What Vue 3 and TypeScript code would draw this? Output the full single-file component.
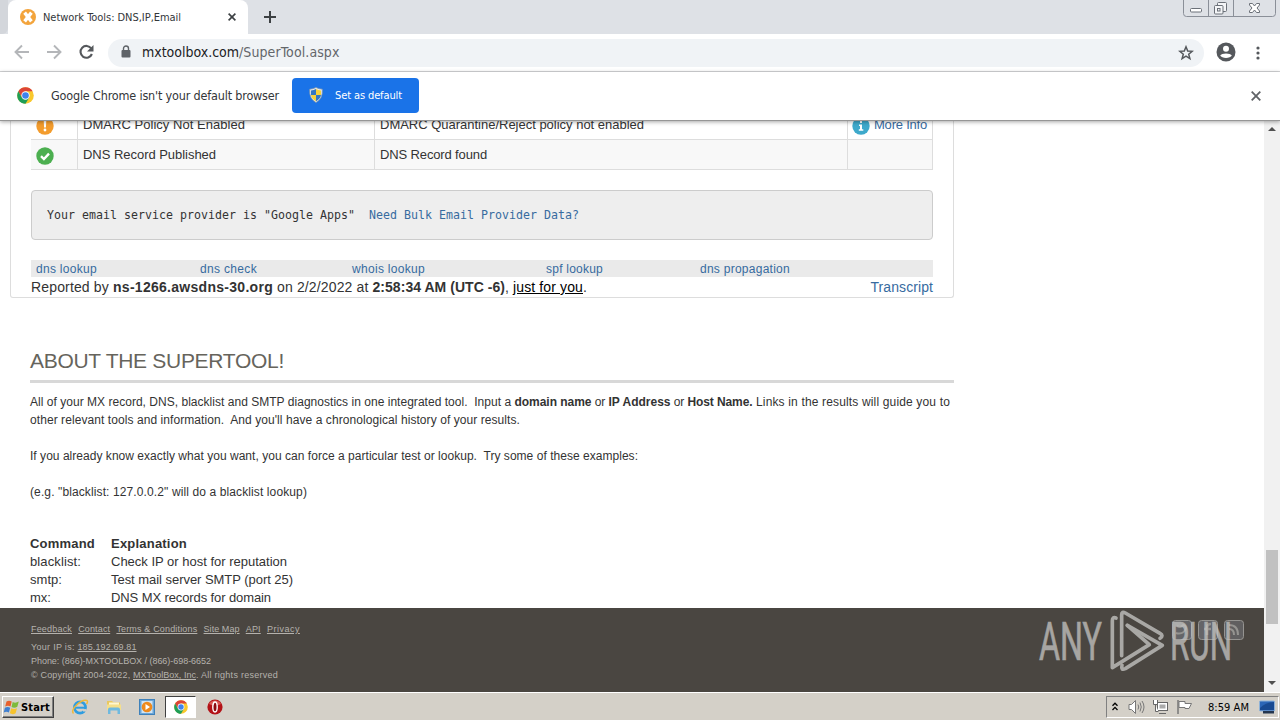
<script setup lang="ts">
interface Piece { t: string; w: number; kind?: string }

const setWidth = (el: HTMLElement, target: number) => {
  const text = el.textContent ?? ''
  el.style.letterSpacing = '0px'
  const natural = el.getBoundingClientRect().width
  el.style.letterSpacing = `${(target - natural) / Math.max(text.length, 1)}px`
}
// Spreads a run of text so that it occupies the given advance width.
const vFit = {
  mounted: (el: HTMLElement, binding: { value: number }) => setWidth(el, binding.value),
}

const report: Piece[] = [
  { t: 'Reported by ', w: 82 },
  { t: 'ns-1266.awsdns-30.org', w: 160, kind: 'bold' },
  { t: ' on 2/2/2022 at ', w: 99.5 },
  { t: '2:58:34 AM (UTC -6)', w: 132.5, kind: 'bold' },
  { t: ', ', w: 8 },
  { t: 'just for you', w: 70, kind: 'under' },
  { t: '.', w: 4 },
]
const about: Piece[][] = [
  [
    { t: 'All of your MX record, DNS, blacklist and SMTP diagnostics in one integrated tool.  Input a ', w: 484.5 },
    { t: 'domain name', w: 77, kind: 'bold' },
    { t: ' or ', w: 17 },
    { t: 'IP Address', w: 62, kind: 'bold' },
    { t: ' or ', w: 17 },
    { t: 'Host Name.', w: 65, kind: 'bold' },
    { t: ' Links in the results will guide you to', w: 197.5 },
  ],
  [{ t: "other relevant tools and information.  And you'll have a chronological history of your results.", w: 490 }],
  [],
  [{ t: 'If you already know exactly what you want, you can force a particular test or lookup.  Try some of these examples:', w: 608 }],
  [],
  [{ t: '(e.g. "blacklist: 127.0.0.2" will do a blacklist lookup)', w: 277 }],
]
const commands = [
  { c: 'Command', cw: 65, e: 'Explanation', ew: 76, head: true },
  { c: 'blacklist:', cw: 51, e: 'Check IP or host for reputation', ew: 176 },
  { c: 'smtp:', cw: 32, e: 'Test mail server SMTP (port 25)', ew: 182 },
  { c: 'mx:', cw: 21, e: 'DNS MX records for domain', ew: 160 },
]
const quick = [
  { t: 'dns lookup', w: 61, col: 164 },
  { t: 'dns check', w: 57, col: 152 },
  { t: 'whois lookup', w: 73, col: 194 },
  { t: 'spf lookup', w: 57, col: 154 },
  { t: 'dns propagation', w: 90, col: 200 },
]
const footLinks: Piece[] = [
  { t: 'Feedback', w: 41 }, { t: 'Contact', w: 32 }, { t: 'Terms & Conditions', w: 81 },
  { t: 'Site Map', w: 36 }, { t: 'API', w: 15 }, { t: 'Privacy', w: 33 },
]
</script>

<template>
  <div class="screen">
    <div class="tabstrip">
      <div class="stub"></div>
      <div class="tab">
        <svg class="fav" width="16" height="16" viewBox="0 0 16 16"><circle cx="8" cy="8" r="8" fill="#f3a43c" /><path d="M4.6 3.6 11.4 12.4M11.4 3.6 4.6 12.4" stroke="#fff" stroke-width="3.4" /></svg>
        <span v-fit="138" class="tabtitle">Network Tools: DNS,IP,Email</span>
        <svg class="tabx" width="8" height="8" viewBox="0 0 8 8"><path d="M.6.6 7.4 7.4M7.4.6.6 7.4" stroke="#3c4043" stroke-width="1.6" /></svg>
      </div>
      <svg class="plus" width="12" height="12" viewBox="0 0 12 12"><path d="M6 0V12M0 6H12" stroke="#3c4043" stroke-width="2" /></svg>
      <div class="winbtns">
        <svg width="93" height="17" viewBox="0 0 93 17" fill="none" stroke="#6b7078">
          <path d="M.5 0V13.5Q.5 16.500 3.500 16.500H89.500Q92.500 16.500 92.500 13.500V0M25.500 0V16M50.500 0V16" stroke="#8a8f98" />
          <rect x="7.500" y="8.500" width="11" height="3.500" rx="1" fill="#fff" />
          <rect x="34.500" y="2.500" width="9" height="9" rx="1" fill="#f4f5f7" /><rect x="31.500" y="5.500" width="8.500" height="8.500" rx="1" fill="#f4f5f7" /><rect x="34.500" y="8.500" width="2.500" height="2.500" />
          <path d="M66.500 3.500H69.500L71.500 6 73.500 3.500H76.500V5L74 8 76.500 11V12.500H73.500L71.500 10 69.500 12.500H66.500V11L69 8 66.500 5Z" fill="#fff" />
        </svg>
      </div>
    </div>

    <div class="toolbar">
      <svg class="nav" width="100" height="20" viewBox="0 0 100 20" fill="none" stroke-width="1.900">
        <path d="M22 10H9M15 3.500 8.500 10 15 16.500" stroke="#b4b6b9" />
        <path d="M40 10H53M47 3.500 53.500 10 47 16.500" stroke="#b4b6b9" />
        <path d="M84.300 6.500A5.900 5.900 0 1 0 84.900 12" stroke="#55585c" stroke-width="2.100" />
        <path d="M86.500 3V9.500H80Z" fill="#55585c" stroke="none" />
      </svg>
      <div class="omni">
        <svg class="lock" width="10" height="13" viewBox="0 0 10 13"><rect x=".5" y="5" width="9" height="7.500" rx="1" fill="#5f6368" /><path d="M2.500 6V3.500A2.500 2.500 0 0 1 7.500 3.500V6" fill="none" stroke="#5f6368" stroke-width="1.400" /></svg>
        <span class="url"><span v-fit="97" class="host">mxtoolbox.com</span><span v-fit="100.500">/SuperTool.aspx</span></span>
        <svg class="star" width="16" height="16" viewBox="0 0 16 16"><path d="M8 1.800 9.700 6 14.200 6.300 10.700 9.200 11.900 13.600 8 11.200 4.100 13.600 5.300 9.200 1.800 6.300 6.300 6Z" fill="none" stroke="#55585c" stroke-width="1.500" /></svg>
      </div>
      <svg class="avatar" width="20" height="20" viewBox="0 0 20 20"><circle cx="10" cy="10" r="9.500" fill="#55585c" /><circle cx="10" cy="6.700" r="3" fill="#fff" /><path d="M4.200 13.600C5.400 10.800 14.600 10.800 15.800 13.600 14.200 16.900 5.800 16.900 4.200 13.600Z" fill="#fff" /></svg>
      <svg class="dots" width="4" height="14" viewBox="0 0 4 14" fill="#55585c"><circle cx="2" cy="2" r="1.600" /><circle cx="2" cy="7" r="1.600" /><circle cx="2" cy="12" r="1.600" /></svg>
    </div>

    <div class="infobar">
      <svg width="17" height="17" viewBox="0 0 16 16"><use href="#chromeball" /></svg>
      <span v-fit="228" class="infotext">Google Chrome isn't your default browser</span>
      <button class="setdef">
        <svg width="14" height="16" viewBox="0 0 14 16"><path d="M7 .5Q10 2 13.300 2.200 14 12 7 15.500 0 12 .7 2.200 4 2 7 .5Z" fill="#e9edf2" stroke="#7d96ac" stroke-width=".8" /><path d="M7 2Q4.500 3.300 2 3.500V8H7Z" fill="#3276c4" /><path d="M7 2Q9.500 3.300 12 3.500V8H7Z" fill="#f6d13b" /><path d="M2 8H7V14.200Q2.600 12 2 8Z" fill="#f6d13b" /><path d="M12 8H7V14.200Q11.400 12 12 8Z" fill="#3276c4" /></svg>
        <span v-fit="67">Set as default</span>
      </button>
      <svg class="infox" width="10" height="10" viewBox="0 0 10 10"><path d="M.7.7 9.300 9.300M9.300.7.7 9.300" stroke="#606367" stroke-width="1.800" /></svg>
    </div>

    <div class="viewport">
      <div class="page">
        <section class="panel">
          <div class="results">
            <div class="row first">
              <div class="ic"><svg width="18" height="18" viewBox="0 0 18 18"><circle cx="9" cy="9" r="8.700" fill="#f39c2d" /><path d="M7.700 3.500H10.300L9.900 10.500H8.100Z" fill="#fff" /><circle cx="9" cy="13" r="1.400" fill="#fff" /></svg></div>
              <div class="name"><span v-fit="162">DMARC Policy Not Enabled</span></div>
              <div class="desc"><span v-fit="264">DMARC Quarantine/Reject policy not enabled</span></div>
              <div class="info"><svg width="18" height="18" viewBox="0 0 18 18"><circle cx="9" cy="9" r="8.700" fill="#3ea9cb" /><path d="M7 7.500H10V12.300H11.300V13.700H6.800V12.300H8V9H7ZM8 3.700H10V6H8Z" fill="#fff" /></svg><a v-fit="53">More Info</a></div>
            </div>
            <div class="row second">
              <div class="ic"><svg width="18" height="18" viewBox="0 0 18 18"><circle cx="9" cy="9" r="8.700" fill="#4caf50" /><path d="M5 9.200 7.900 12 13 6.700" fill="none" stroke="#fff" stroke-width="2.400" /></svg></div>
              <div class="name"><span v-fit="133">DNS Record Published</span></div>
              <div class="desc"><span v-fit="107">DNS Record found</span></div>
              <div class="info"></div>
            </div>
          </div>
          <div class="provider"><span v-fit="308">Your email service provider is "Google Apps"</span><a v-fit="210">Need Bulk Email Provider Data?</a></div>
          <nav class="quick">
            <div v-for="q in quick" :key="q.t" :style="{ width: q.col + 'px' }"><a v-fit="q.w">{{ q.t }}</a></div>
          </nav>
          <div class="report">
            <span v-for="p in report" :key="p.t" v-fit="p.w" :class="p.kind">{{ p.t }}</span>
            <a v-fit="62.500" class="transcript">Transcript</a>
          </div>
        </section>

        <section class="about">
          <h2><span v-fit="254">ABOUT THE SUPERTOOL!</span></h2>
          <div class="prose">
            <div v-for="(line, i) in about" :key="i" class="line"><span v-for="(p, j) in line" :key="j" v-fit="p.w" :class="p.kind">{{ p.t }}</span></div>
          </div>
          <div class="cmds">
            <div v-for="c in commands" :key="c.c" class="cmd" :class="{ bold: c.head }">
              <div class="cname"><span v-fit="c.cw">{{ c.c }}</span></div><span v-fit="c.ew">{{ c.e }}</span>
            </div>
          </div>
        </section>

        <footer class="foot">
          <div class="flinks"><a v-for="l in footLinks" :key="l.t" v-fit="l.w">{{ l.t }}</a></div>
          <div class="fline ip"><span v-fit="46.5">Your IP is: </span><a v-fit="59">185.192.69.81</a></div>
          <div class="fline"><span v-fit="180">Phone: (866)-MXTOOLBOX / (866)-698-6652</span></div>
          <div class="fline"><span v-fit="102">© Copyright 2004-2022, </span><a v-fit="63">MXToolBox, Inc</a><span v-fit="82">. All rights reserved</span></div>
        </footer>
      </div>
      <div class="scroll">
        <svg width="8" height="4" viewBox="0 0 8 4"><path d="M0 4 4 0 8 4Z" fill="#505050" /></svg>
        <div class="thumb"></div>
        <svg width="8" height="4" viewBox="0 0 8 4"><path d="M0 0H8L4 4Z" fill="#505050" /></svg>
      </div>
    </div>

    <div class="taskbar">
      <div class="start">
        <svg width="18" height="17" viewBox="0 0 18 17"><path d="M3.500 2.500Q6 .8 8.700 2.500L7.500 7.500Q5 6 2.200 7.500Z" fill="#e8602c" /><path d="M9.700 3Q12.500 4.500 15.800 2.500L14.300 7.700Q11.500 9.500 8.500 7.900Z" fill="#7dba3b" /><path d="M1.900 8.700Q4.600 7.200 7.200 8.700L5.900 13.600Q3.500 12 .7 13.500Z" fill="#3f7fd0" /><path d="M8.200 9.200Q11 10.800 14 9.200L12.600 14.200Q9.700 16 6.900 14.300Z" fill="#f6c32d" /></svg>
        <span v-fit="29">Start</span>
      </div>
      <svg class="ie" width="18" height="18" viewBox="0 0 18 18" fill="none"><circle cx="9" cy="9.500" r="5.600" stroke="#2f9de0" stroke-width="2.600" /><path d="M4 9.700H14.500" stroke="#2f9de0" stroke-width="2" /><path d="M12 12.300H15.500" stroke="#d4d0c8" stroke-width="2.400" /><path d="M2.500 15.500C-1 12 10 .8 15.700 2.400 17 3 16.500 4.700 15.500 6.200" stroke="#eeb83a" stroke-width="1.500" /></svg>
      <svg class="folder" width="18" height="18" viewBox="0 0 18 18"><path d="M2 3H7L8.500 4.500H15V12H2Z" fill="#e9c85f" /><path d="M4 4.500H14V9H4Z" fill="#fff7cf" /><path d="M2 6.500H16V12H2Z" fill="#f5df8b" /><path d="M3 16V11.500Q3 9.500 5 9.500H13Q15 9.500 15 11.500V16H12.500V12.500H5.500V16Z" fill="#6fb9df" /></svg>
      <svg class="wmp" width="16" height="16" viewBox="0 0 16 16"><rect x=".5" y=".5" width="15" height="15" fill="#6aa6d8" stroke="#3f81ba" /><rect x="2.500" y="2" width="11" height="12" fill="#cfe3f3" /><circle cx="8" cy="8" r="5.300" fill="#ee8a1d" /><path d="M6.500 5 11 8 6.500 11Z" fill="#fff" /></svg>
      <div class="active"><svg width="14" height="14" viewBox="0 0 16 16"><g id="chromeball"><circle cx="8" cy="8" r="7.800" fill="#f9c82d" /><path d="M8 .2A7.800 7.800 0 0 1 14.750 4.100H8L4.600 10 1.250 4.100A7.800 7.800 0 0 1 8 .2Z" fill="#dc4437" /><path d="M1.250 4.100A7.800 7.800 0 0 0 8 15.800L11.400 10H4.600Z" fill="#1e9e57" /><circle cx="8" cy="8" r="3.900" fill="#fff" /><circle cx="8" cy="8" r="3.100" fill="#3f83ec" /></g></svg></div>
      <svg class="opera" width="16" height="16" viewBox="0 0 16 16"><circle cx="8" cy="8" r="7.600" fill="#b31217" /><path d="M2 5A7 7 0 0 1 14 5Q8 8 2 5Z" fill="#db5a55" /><ellipse cx="8" cy="8" rx="2.200" ry="5" fill="#8c0b10" stroke="#fff" stroke-width="1.400" /></svg>
      <div class="tray">
        <svg class="chev" width="6" height="9" viewBox="0 0 6 9" fill="none" stroke="#000" stroke-width="1.300"><path d="M.5 3.800 3 1.200 5.500 3.800M.5 8 3 5.400 5.500 8" /></svg>
        <svg class="spk" width="17" height="16" viewBox="0 0 17 16" fill="none" stroke="#777"><path d="M1 5.500H3.500L7.500 1.500V14.500L3.500 10.500H1Z" fill="#fff" /><path d="M10 5.500Q11.500 8 10 10.500M12 3.500Q14.500 8 12 12.500M14 2Q18 8 14 14" /></svg>
        <svg class="net" width="17" height="16" viewBox="0 0 17 16" fill="#fff" stroke="#666"><rect x="5.500" y="3.500" width="10" height="8" /><rect x="7.500" y="5.500" width="6" height="4" fill="#aaa" stroke="none" /><path d="M7 14.500H14M1.500 1V5.500H5.500V1M3.500 5.500V12.500H6.500" /></svg>
        <svg class="flag" width="17" height="16" viewBox="0 0 17 16" fill="#fff" stroke="#777"><path d="M3 2.500H9V4.500H15.500L13 9.500H9V8.500H3Z" /><path d="M2 1V15" stroke-width="1.500" /></svg>
        <span v-fit="41" class="clock">8:59 AM</span>
        <svg class="desk" width="16" height="14" viewBox="0 0 16 14"><rect x=".5" y="1" width="15" height="10" rx="1" fill="#2c66b6" stroke="#8eb2d8" /><path d="M1 8Q8 2 15 2V10H1Z" fill="#194a91" /><rect x="4" y="11" width="11" height="2.500" fill="#24364f" /></svg>
      </div>
    </div>

    <svg class="mark" width="220" height="72" viewBox="0 0 220 72">
      <g fill="none" stroke="#c8c8c6" opacity=".6">
        <g transform="translate(142 16)"><rect x=".5" y=".5" width="19" height="19" rx="3" fill="#777b82" /><path d="M5 6C8 8 9 7 10 6 12 4 14 6 14 8 12 14 7 14 4 13" stroke-width="2" /></g>
        <g transform="translate(168 16)"><rect x=".5" y=".5" width="19" height="19" rx="3" fill="#777b82" /><path d="M13 4Q9 4 9 8V15M6 9H13" stroke-width="2.500" /></g>
        <g transform="translate(194 16)"><rect x=".5" y=".5" width="19" height="19" rx="3" fill="#6f7175" /><path d="M5 5Q14 5 14 15M5 9Q10 9 10 15" stroke-width="2" /></g>
      </g>
      <g class="marktext" opacity=".75" fill="#c6c5c3" stroke="#c6c5c3" stroke-width=".7">
        <text x="9" y="56" textLength="63" lengthAdjust="spacingAndGlyphs">ANY</text>
        <text x="140" y="56" textLength="62" lengthAdjust="spacingAndGlyphs">RUN</text>
      </g>
      <g transform="translate(70 0) scale(.33333)" fill="none" stroke="#a9a8a5" stroke-width="11" stroke-linejoin="round" stroke-linecap="round">
        <path d="M48 42Q37 38 37 50V191L148 122 82 64" />
        <path d="M180 103Q192 95 180 88L76 27Q65 21 65 32V155" />
        <path d="M66 184Q62 200 76 194L187 124 82 64" />
      </g>
    </svg>
  </div>
</template>

<style>
html, body { overflow: hidden; background: #fff; }
</style>

<style scoped>
.screen { position: relative; width: 1280px; height: 720px; overflow: hidden; display: flex; flex-direction: column; background: #fff; font-family: "Liberation Sans", Arial, sans-serif; color: #333; }
.screen * { box-sizing: border-box; }
.screen svg { display: block; flex: none; }
span, a { white-space: pre; flex: none; display: inline-block; }
.bold { font-weight: bold; }
.tabstrip, .toolbar, .infobar, .taskbar { font-family: "DejaVu Sans Condensed", "DejaVu Sans", sans-serif; font-stretch: condensed; }
.tabstrip { height: 34px; display: flex; background: #dee1e6; flex: none; }
.stub { width: 8px; background: #d3d6db; border-radius: 0 0 6px 0; }
.tab { width: 240px; background: #fff; border-radius: 8px 8px 0 0; display: flex; align-items: center; padding-left: 12px; }
.tabtitle { font-size: 11px; color: #333639; margin-left: 7px; }
.tabx { margin-left: 47px; }
.plus { margin: 11px 0 0 16px; }
.winbtns { margin-left: 907px; }
.toolbar { height: 38px; display: flex; align-items: center; border-bottom: 1px solid #d5d6d8; flex: none; background: #fff; padding-bottom: 1px; }
.nav { margin-left: 7px; }
.omni { width: 1096px; height: 28px; border-radius: 14px; background: #f0f3f6; display: flex; align-items: center; padding-left: 13px; margin-left: 1px; margin-top: 1px; }
.lock { margin-top: -2px; }
.url { display: flex; font-size: 14px; margin-left: 11px; margin-top: -1px; color: #63666a; }
.host { color: #202124; }
.star { margin-left: 838.500px; }
.avatar { margin-left: 12px; }
.dots { margin-left: 20px; margin-top: 1px; }
.infobar { height: 49px; flex: none; display: flex; align-items: center; padding: 0 0 2px 17px; background: #fff; position: relative; z-index: 2; border-bottom: 1px solid #969696; box-shadow: 0 1px 4px rgba(0,0,0,.35); }
.infotext { font-size: 12.500px; color: #333639; margin-left: 17px; }
.setdef { width: 127px; height: 35px; margin-left: 13px; border: 0; border-radius: 4px; background: #1a73e8; color: #fff; display: flex; align-items: center; padding: 0 0 0 17px; font: inherit; font-size: 11px; }
.setdef span { margin-left: 12px; }
.infox { margin-left: 832px; margin-top: 1px; }
.viewport { height: 571px; flex: none; display: flex; background: #fff; }
.page { width: 1264px; overflow: hidden; display: flex; flex-direction: column; }
.panel { width: 944px; height: 177px; flex: none; margin-left: 10px; border: 1px solid #ddd; border-top: 0; border-radius: 0 0 3px 3px; padding-left: 20px; }
.results { width: 902px; height: 49px; border: 1px solid #ddd; border-top: 0; border-left: 0; overflow: hidden; font-size: 13px; }
.row { display: flex; }
.row > div { display: flex; align-items: center; border-left: 1px solid #ddd; }
.row .ic { width: 46px; border-left: 0; padding-left: 4.500px; }
.row .name { width: 297px; padding-left: 5px; }
.row .desc { width: 473px; padding-left: 5px; }
.row .info { width: 85px; padding-left: 4px; }
.row .info a { margin-left: 4px; }
.row.first { height: 30px; margin-top: -12px; }
.row.first svg { margin-top: 3px; }
.row.second { height: 31px; border-top: 1px solid #ddd; background: #f8f8f8; }
.row.second > div { padding-bottom: 2px; }
.row.second svg { margin-top: 3px; }
a { color: #376b9f; }
.provider { width: 902px; height: 50px; margin-top: 20px; border: 1px solid #ccc; border-radius: 4px; background: #eee; display: flex; gap: 14px; align-items: center; padding-left: 15px; font-family: "DejaVu Sans Mono", monospace; font-size: 11.600px; }
.quick { width: 902px; height: 17px; margin-top: 20px; background: #eaeaea; display: flex; padding: 1px 0 0 5px; font-size: 12px; line-height: 17px; }
.report { width: 902px; display: flex; font-size: 14px; line-height: 20px; height: 20px; }
.under { text-decoration: underline; color: #000; }
.transcript { margin-left: auto; }
.about { width: 924px; height: 310px; flex: none; margin-left: 30px; padding-top: 48px; }
h2 { margin: 0; height: 37px; border-bottom: 3px solid #d8d8d8; color: #66645c; font-weight: normal; font-size: 21px; line-height: 30px; }
.prose { margin-top: 10px; font-size: 12px; line-height: 18px; }
.line { display: flex; height: 18px; }
.cmds { margin-top: 34px; font-size: 13px; line-height: 18px; }
.cmd { display: flex; height: 18px; }
.cname { width: 81px; }
.foot { height: 84px; flex: none; background: #4a4641; padding: 14px 0 0 31px; color: #b5b2ad; font-size: 9px; line-height: 14px; }
.foot a { color: #b5b2ad; text-decoration: underline; }
.flinks { display: flex; gap: 6.200px; height: 14px; }
.fline { display: flex; height: 14px; }
.ip { margin-top: 4px; }
.scroll { width: 16px; background: #f1f1f1; display: flex; flex-direction: column; align-items: center; padding: 6px 0 7px; }
.thumb { width: 12px; height: 74px; background: #c1c1c1; margin: 419px 0 57px; }
.taskbar { height: 28px; flex: none; background: #d4d0c8; border-top: 1px solid #fff; display: flex; align-items: center; padding-left: 2px; font-size: 11px; color: #000; }
.start { width: 52px; height: 22px; background: #d4d0c8; border: 1px solid; border-color: #fff #404040 #404040 #fff; box-shadow: inset -1px -1px #808080; display: flex; align-items: center; font-weight: bold; padding-left: 0; margin-top: 1px; }
.ie { margin-left: 17px; }
.folder { margin-left: 16px; }
.wmp { margin-left: 16px; }
.active { width: 31px; height: 22px; margin-left: 10px; margin-top: 1px; background: #fff; border: 1px solid; border-color: #404040 #fff #fff #404040; display: flex; align-items: center; justify-content: center; }
.opera { margin-left: 11px; }
.tray { width: 173px; height: 22px; margin-left: 883px; margin-top: 1px; border: 1px solid; border-color: #808080 #fff #fff #808080; display: flex; align-items: center; }
.chev { margin-left: 5px; margin-top: -2px; }
.spk { margin-left: 10px; }
.net { margin-left: 7px; }
.flag { margin-left: 7px; }
.clock { margin-left: 15px; }
.desk { margin-left: 10px; }
.mark { position: absolute; left: 1030px; top: 604px; z-index: 3; }
.marktext { font-family: Roboto, "Liberation Sans", sans-serif; font-size: 53px; }
</style>
